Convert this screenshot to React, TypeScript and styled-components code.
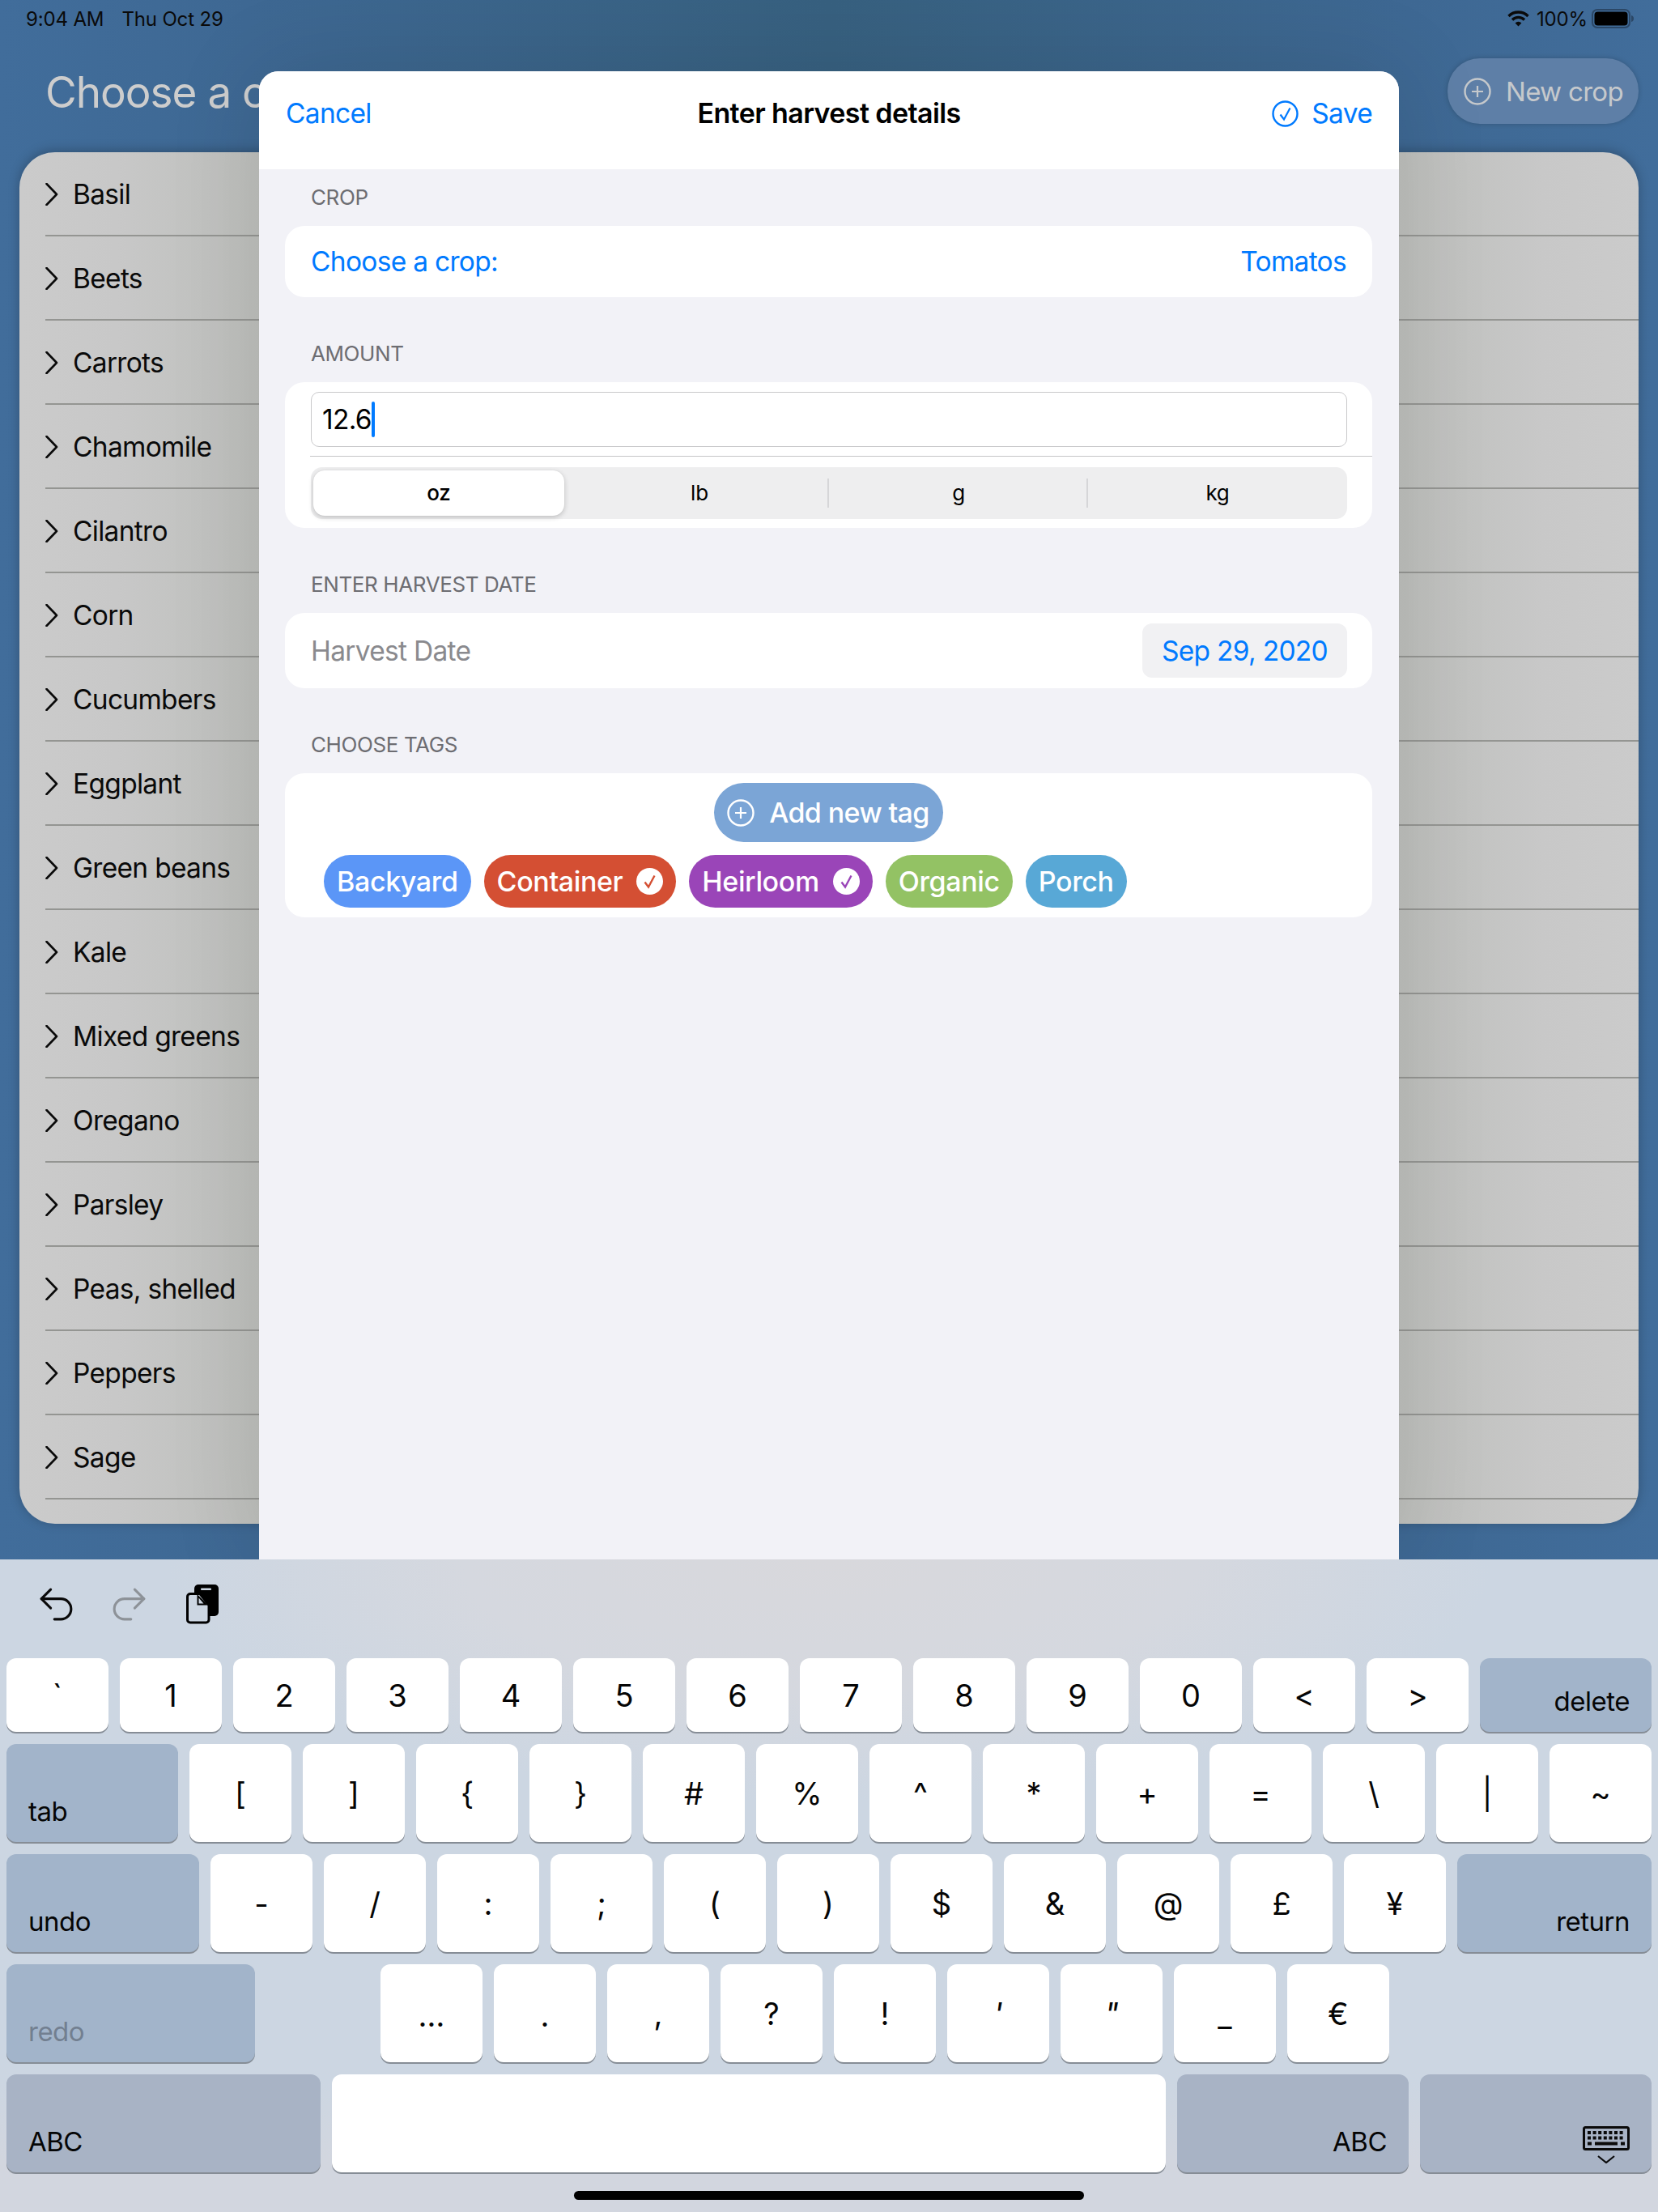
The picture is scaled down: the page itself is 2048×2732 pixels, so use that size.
import React from 'react';
import styled, { createGlobalStyle } from 'styled-components';
import { Undo2, Redo2 } from 'lucide-react';

const GlobalStyle = createGlobalStyle`
    html, body {
        margin: 0;
        padding: 0;
    }
    body {
        font-family: Inter, 'Liberation Sans', sans-serif;
        color: #000;
    }
    * {
        box-sizing: border-box;
    }
`;

const Page = styled.div`
    position: relative;
    width: 2048px;
    height: 2732px;
    display: flex;
    flex-direction: column;
    overflow: hidden;
`;

const Backdrop = styled.div`
    position: relative;
    height: 1926px;
    display: flex;
    flex-direction: column;
    background: linear-gradient(90deg, #416d9b 0%, #3e6893 15%, #37607f 50%, #3e6893 85%, #416d9b 100%);
`;

const StatusBar = styled.div`
    height: 46px;
    padding: 0 30px 0 32px;
    display: flex;
    align-items: center;
    font-size: 24px;
    letter-spacing: -0.15px;
    color: #0a0a0a;
`;

const StatusDate = styled.span`
    margin-left: 22px;
    flex: 1;
`;

const StatusPercent = styled.span`
    margin: 0 5px 0 9px;
`;

const Header = styled.div`
    height: 142px;
    padding: 26px 24px 0 56px;
    display: flex;
    justify-content: space-between;
    align-items: flex-start;
`;

const PageTitle = styled.h1`
    margin: 0;
    height: 81px;
    padding-top: 2px;
    line-height: 81px;
    font-size: 53px;
    font-weight: 400;
    letter-spacing: -1px;
    color: #cdcdcd;
`;

const NewCropButton = styled.div`
    width: 236px;
    height: 81px;
    padding-left: 20px;
    display: flex;
    align-items: center;
    gap: 18px;
    border-radius: 40px;
    background: #5e7fa7;
    box-shadow: 0 0 6px rgba(0, 0, 0, 0.2);
    font-size: 33px;
    letter-spacing: -0.7px;
    color: #c6c9cc;
`;

const CropPanel = styled.div`
    margin: 0 24px;
    height: 1694px;
    border-radius: 44px;
    background: linear-gradient(90deg, #cbcbcb 0%, #c8c8c8 6%, #babcb8 17%, #babcb8 83%, #c8c8c8 94%, #cbcbcb 100%);
    box-shadow: 0 -2px 14px rgba(0, 0, 0, 0.25);
    overflow: hidden;
`;

const CropRow = styled.div`
    height: 104px;
    margin-left: 32px;
    padding-top: 2px;
    display: flex;
    align-items: center;
    gap: 18px;
    border-bottom: 2px solid #949592;
    font-size: 33.5px;
    letter-spacing: -0.7px;
    color: #0a0a0a;
`;

const Sheet = styled.div`
    position: absolute;
    top: 88px;
    left: 320px;
    width: 1408px;
    bottom: 0;
    display: flex;
    flex-direction: column;
    border-radius: 24px 24px 0 0;
    background: #f2f2f7;
    box-shadow: 0 0 120px rgba(0, 0, 0, 0.1);
`;

const SheetHeader = styled.div`
    position: relative;
    height: 121px;
    padding: 0 33px 17px;
    display: flex;
    justify-content: space-between;
    align-items: center;
    border-radius: 24px 24px 0 0;
    background: #fff;
    font-size: 33.5px;
    letter-spacing: -0.7px;
    color: #007aff;
`;

const SheetTitle = styled.div`
    position: absolute;
    left: 50%;
    top: 32px;
    transform: translateX(-50%);
    white-space: nowrap;
    line-height: 40px;
    font-size: 34px;
    font-weight: 600;
    letter-spacing: -0.6px;
    color: #000;
`;

const SaveAction = styled.div`
    display: flex;
    align-items: center;
    gap: 16px;
`;

const SheetBody = styled.div`
    padding: 0 33px 0 32px;
`;

const Section = styled.section`
    margin-bottom: 35px;
`;

const SectionLabel = styled.div`
    height: 70px;
    line-height: 70px;
    padding-left: 32px;
    font-size: 26px;
    letter-spacing: -0.4px;
    color: #6d6d72;
`;

const Card = styled.div`
    border-radius: 24px;
    background: #fff;
    font-size: 33.5px;
    letter-spacing: -0.7px;
`;

const CropCard = styled(Card)`
    height: 88px;
    padding: 0 32px;
    display: flex;
    justify-content: space-between;
    align-items: center;
    color: #007aff;
`;

const AmountCard = styled(Card)`
    height: 180px;
    padding-top: 12px;
`;

const AmountInput = styled.div`
    height: 68px;
    margin: 0 31px 0 32px;
    padding-left: 13px;
    display: flex;
    align-items: center;
    border: 1px solid #c9c9cb;
    border-radius: 10px;
`;

const Caret = styled.span`
    width: 4px;
    height: 44px;
    border-radius: 2px;
    background: #007aff;
`;

const Divider = styled.div`
    height: 1px;
    margin: 11px 0 13px 31px;
    background: #c6c6c8;
`;

const Segments = styled.div`
    height: 64px;
    margin: 1px 31px 0 32px;
    display: grid;
    grid-template-columns: repeat(4, 1fr);
    border-radius: 14px;
    background: #eeeeef;
`;

const Segment = styled.div<{ $selected?: boolean; $divider?: boolean }>`
    position: relative;
    display: flex;
    justify-content: center;
    align-items: center;
    padding-bottom: 2px;
    font-size: 26px;
    letter-spacing: -0.2px;
    font-weight: ${(props) => (props.$selected ? 500 : 400)};
    ${(props) =>
        props.$selected
            ? `
        margin: 4px 7px 4px 3px;
        border-radius: 14px;
        background: #fff;
        box-shadow: 0 2px 6px rgba(0, 0, 0, 0.2), 0 0 1px rgba(0, 0, 0, 0.1);
    `
            : ''}
    ${(props) =>
        props.$divider
            ? `
        &::before {
            content: '';
            position: absolute;
            left: -2px;
            top: 14px;
            bottom: 14px;
            width: 2px;
            background: #d6d6d8;
        }
    `
            : ''}
`;

const DateCard = styled(Card)`
    height: 93px;
    padding: 0 31px 0 32px;
    display: flex;
    justify-content: space-between;
    align-items: center;
    color: #8a8a8e;
`;

const DatePill = styled.div`
    height: 67px;
    padding: 0 24px;
    display: flex;
    align-items: center;
    border-radius: 12px;
    background: #f1f1f3;
    color: #007aff;
`;

const TagCard = styled(Card)`
    padding: 12px 48px;
    display: flex;
    flex-direction: column;
`;

const AddTagButton = styled.div`
    align-self: center;
    height: 73px;
    padding: 0 17px 0 16px;
    display: flex;
    align-items: center;
    gap: 18px;
    border-radius: 37px;
    background: #7ba5d6;
    font-size: 34px;
    letter-spacing: -0.6px;
    font-weight: 500;
    color: #fff;
`;

const TagRow = styled.div`
    margin-top: 16px;
    display: flex;
    gap: 16px;
`;

const Tag = styled.div<{ $color: string }>`
    height: 65px;
    padding: 0 16px;
    display: flex;
    align-items: center;
    gap: 17px;
    border-radius: 33px;
    background: ${(props) => props.$color};
    font-size: 34px;
    letter-spacing: -0.37px;
    font-weight: 500;
    color: #fff;
`;

const Keyboard = styled.div`
    position: relative;
    flex: 1;
    padding: 0 8px;
    background:
        radial-gradient(ellipse 820px 300px at 50% 0, #d8d8dc 0%, #d5d8df 55%, rgba(204, 214, 226, 0) 100%),
        linear-gradient(180deg, #ccd6e2 0%, #ccd6e2 80%, #d2d6df 92%, #d2d6df 100%);
`;

const KeyToolbar = styled.div`
    height: 122px;
    padding: 0 0 12px 34px;
    display: flex;
    align-items: center;
`;

const ToolbarIcon = styled.div<{ $dim?: boolean; $width: number }>`
    width: ${(props) => props.$width}px;
    display: flex;
    color: ${(props) => (props.$dim ? '#8d9298' : '#0a0a0a')};
`;

const KeyRows = styled.div`
    display: flex;
    flex-direction: column;
    gap: 15px;
`;

const KeyRow = styled.div<{ $height: number }>`
    height: ${(props) => props.$height}px;
    display: flex;
    gap: 14px;
`;

const Key = styled.div<{ $width?: number; $fn?: boolean; $slant?: boolean; $bottom?: boolean; $low?: boolean }>`
    flex: 0 0 ${(props) => props.$width ?? 126}px;
    display: flex;
    justify-content: center;
    align-items: center;
    padding-top: ${(props) => (props.$low ? 4 : 0)}px;
    border-radius: 12px;
    background: ${(props) => (props.$fn ? (props.$bottom ? '#a8b3c5' : '#a2b4ca') : '#fff')};
    box-shadow: 0 2px 0 #868d96;
    font-size: 38px;
    font-style: ${(props) => (props.$slant ? 'italic' : 'normal')};
    color: #050505;
`;

const LabelKey = styled(Key)<{ $right?: boolean; $dim?: boolean }>`
    justify-content: ${(props) => (props.$right ? 'flex-end' : 'flex-start')};
    align-items: flex-end;
    padding: 0 27px 18px 27px;
    font-size: 33px;
    letter-spacing: -0.5px;
    color: ${(props) => (props.$dim ? '#727f90' : '#050505')};
`;

const HideKey = styled(LabelKey)`
    padding-bottom: 11px;
`;

const RedoGap = styled.div`
    width: 127px;
`;

const HomeIndicator = styled.div`
    width: 630px;
    height: 11px;
    margin: 23px auto 0;
    border-radius: 6px;
    background: #000;
`;

const CROPS = [
    'Basil',
    'Beets',
    'Carrots',
    'Chamomile',
    'Cilantro',
    'Corn',
    'Cucumbers',
    'Eggplant',
    'Green beans',
    'Kale',
    'Mixed greens',
    'Oregano',
    'Parsley',
    'Peas, shelled',
    'Peppers',
    'Sage',
];

const TAGS = [
    { name: 'Backyard', color: '#5b96f7', checked: false },
    { name: 'Container', color: '#d44f33', checked: true },
    { name: 'Heirloom', color: '#9a45b8', checked: true },
    { name: 'Organic', color: '#93c264', checked: false },
    { name: 'Porch', color: '#58a8d6', checked: false },
];

const UNITS = ['oz', 'lb', 'g', 'kg'];

const ROW_ONE = ['`', '1', '2', '3', '4', '5', '6', '7', '8', '9', '0', '<', '>'];
const ROW_TWO = ['[', ']', '{', '}', '#', '%', '^', '*', '+', '=', '\\', '|', '~'];
const ROW_THREE = ['-', '/', ':', ';', '(', ')', '$', '&', '@', '£', '¥'];
const ROW_FOUR = ['…', '.', ',', '?', '!', "'", '"', '_', '€'];

const Chevron = () => (
    <svg width="16" height="28" viewBox="0 0 16 28" fill="none">
        <path d="M1.5 1 14 14 1.5 27" stroke="#0a0a0a" strokeWidth="2.6" strokeLinecap="round" strokeLinejoin="round" />
    </svg>
);

const PlusCircle = ({ size = 34 }: { size?: number }) => (
    <svg width={size} height={size} viewBox="0 0 34 34" fill="none" stroke="currentColor">
        <circle cx="17" cy="17" r="15.5" strokeWidth="2.4" />
        <path d="M17 10v14M10 17h14" strokeWidth="2.2" />
    </svg>
);

const SaveCheck = () => (
    <svg width="33" height="33" viewBox="0 0 33 33" fill="none" stroke="#007aff">
        <circle cx="16.5" cy="16.5" r="15" strokeWidth="2.4" />
        <path d="M10.5 17.5l4.5 6 7.5-14" strokeWidth="2.2" />
    </svg>
);

const TagCheck = ({ color }: { color: string }) => (
    <svg width="33" height="33" viewBox="0 0 33 33">
        <circle cx="16.5" cy="16.5" r="16.5" fill="#fff" />
        <path d="M10.5 17.5l4.5 6 7.5-14" fill="none" stroke={color} strokeWidth="2.4" />
    </svg>
);

const WifiIcon = () => (
    <svg width="27" height="20" viewBox="0 0 27 20" fill="none" stroke="#0a0a0a" strokeWidth="3.4">
        <path d="M1.5 7a17 17 0 0 1 24 0" />
        <path d="M6 11.5a10.6 10.6 0 0 1 15 0" />
        <path d="M13.5 19.5 9.6 15.4a5.6 5.6 0 0 1 7.8 0Z" fill="#0a0a0a" stroke="none" />
    </svg>
);

const BatteryIcon = () => (
    <svg width="52" height="24" viewBox="0 0 52 24" fill="none">
        <rect x="1" y="1" width="46" height="22" rx="6" stroke="#2b4766" strokeWidth="2" />
        <rect x="3.5" y="3.5" width="41" height="17" rx="4" fill="#000" />
        <path d="M49 8c2 .5 3 2 3 4s-1 3.500-3 4Z" fill="#2b4766" />
    </svg>
);

const PasteIcon = () => (
    <svg width="40" height="49" viewBox="0 0 40 49">
        <rect x="10" y="0" width="30" height="39" rx="5" fill="#000" />
        <rect x="18" y="4.500" width="13" height="2.500" rx="1" fill="#ccd6e2" />
        <path
            d="M5 11.500h12l11 14v18a3.500 3.500 0 0 1-3.500 3.500H5a3.500 3.500 0 0 1-3.500-3.500V15a3.500 3.500 0 0 1 3.500-3.500Z"
            fill="#ccd6e2"
            stroke="#000"
            strokeWidth="3"
        />
        <path d="M13.500 12v13.500H27Z" fill="#000" />
        <path d="M15.500 16.500v7h6Z" fill="#ccd6e2" />
    </svg>
);

const KeyboardHideIcon = () => (
    <svg width="58" height="46" viewBox="0 0 58 46" fill="none">
        <rect x="1.500" y="1.500" width="55" height="27" rx="2" stroke="#0a0a0a" strokeWidth="3" />
        <path d="M6 8h46M6 14.500h46" stroke="#0a0a0a" strokeWidth="4" strokeDasharray="4 2.600" />
        <path d="M6 21.500h5M15 21.500h28M47 21.500h5" stroke="#0a0a0a" strokeWidth="4" />
        <path d="M19 37l10 8 10-8" stroke="#0a0a0a" strokeWidth="2.200" />
    </svg>
);

export default function App() {
    return (
        <Page>
            <GlobalStyle />
            <Backdrop>
                <StatusBar>
                    <span>9:04 AM</span>
                    <StatusDate>Thu Oct 29</StatusDate>
                    <WifiIcon />
                    <StatusPercent>100%</StatusPercent>
                    <BatteryIcon />
                </StatusBar>
                <Header>
                    {/* the rest of this title sits behind the sheet in the reference */}
                    <PageTitle>Choose a c</PageTitle>
                    <NewCropButton>
                        <PlusCircle />
                        New crop
                    </NewCropButton>
                </Header>
                <CropPanel>
                    {CROPS.map((crop) => (
                        <CropRow key={crop}>
                            <Chevron />
                            {crop}
                        </CropRow>
                    ))}
                </CropPanel>

                <Sheet>
                    <SheetHeader>
                        <span>Cancel</span>
                        <SheetTitle>Enter harvest details</SheetTitle>
                        <SaveAction>
                            <SaveCheck />
                            Save
                        </SaveAction>
                    </SheetHeader>
                    <SheetBody>
                        <Section>
                            <SectionLabel>CROP</SectionLabel>
                            <CropCard>
                                <span>Choose a crop:</span>
                                <span>Tomatos</span>
                            </CropCard>
                        </Section>
                        <Section>
                            <SectionLabel>AMOUNT</SectionLabel>
                            <AmountCard>
                                <AmountInput>
                                    12.6
                                    <Caret />
                                </AmountInput>
                                <Divider />
                                <Segments>
                                    {UNITS.map((unit, index) => (
                                        <Segment key={unit} $selected={index === 0} $divider={index > 1}>
                                            {unit}
                                        </Segment>
                                    ))}
                                </Segments>
                            </AmountCard>
                        </Section>
                        <Section>
                            <SectionLabel>ENTER HARVEST DATE</SectionLabel>
                            <DateCard>
                                <span>Harvest Date</span>
                                <DatePill>Sep 29, 2020</DatePill>
                            </DateCard>
                        </Section>
                        <Section>
                            <SectionLabel>CHOOSE TAGS</SectionLabel>
                            <TagCard>
                                <AddTagButton>
                                    <PlusCircle />
                                    Add new tag
                                </AddTagButton>
                                <TagRow>
                                    {TAGS.map((tag) => (
                                        <Tag key={tag.name} $color={tag.color}>
                                            {tag.name}
                                            {tag.checked && <TagCheck color={tag.color} />}
                                        </Tag>
                                    ))}
                                </TagRow>
                            </TagCard>
                        </Section>
                    </SheetBody>
                </Sheet>
            </Backdrop>

            <Keyboard>
                <KeyToolbar>
                    <ToolbarIcon $width={90}>
                        <Undo2 size={55} strokeWidth={1.35} />
                    </ToolbarIcon>
                    <ToolbarIcon $width={98} $dim>
                        <Redo2 size={55} strokeWidth={1.35} />
                    </ToolbarIcon>
                    <ToolbarIcon $width={40}>
                        <PasteIcon />
                    </ToolbarIcon>
                </KeyToolbar>
                <KeyRows>
                    <KeyRow $height={91}>
                        {ROW_ONE.map((k) => (
                            <Key key={k}>{k}</Key>
                        ))}
                        <LabelKey $fn $right $width={212}>
                            delete
                        </LabelKey>
                    </KeyRow>
                    <KeyRow $height={121}>
                        <LabelKey $fn $width={212}>
                            tab
                        </LabelKey>
                        {ROW_TWO.map((k) => (
                            <Key key={k}>{k}</Key>
                        ))}
                    </KeyRow>
                    <KeyRow $height={121}>
                        <LabelKey $fn $width={238}>
                            undo
                        </LabelKey>
                        {ROW_THREE.map((k) => (
                            <Key key={k}>{k}</Key>
                        ))}
                        <LabelKey $fn $right $width={240}>
                            return
                        </LabelKey>
                    </KeyRow>
                    <KeyRow $height={121}>
                        <LabelKey $fn $dim $width={307}>
                            redo
                        </LabelKey>
                        <RedoGap />
                        {ROW_FOUR.map((k) => (
                            <Key key={k} $slant={k === "'" || k === '"'} $low={k === '…' || k === '.' || k === '_'}>
                                {k}
                            </Key>
                        ))}
                    </KeyRow>
                    <KeyRow $height={121}>
                        <LabelKey $fn $bottom $width={388}>
                            ABC
                        </LabelKey>
                        <Key $width={1030} />
                        <LabelKey $fn $bottom $right $width={286}>
                            ABC
                        </LabelKey>
                        <HideKey $fn $bottom $right $width={286}>
                            <KeyboardHideIcon />
                        </HideKey>
                    </KeyRow>
                </KeyRows>
                <HomeIndicator />
            </Keyboard>
        </Page>
    );
}
